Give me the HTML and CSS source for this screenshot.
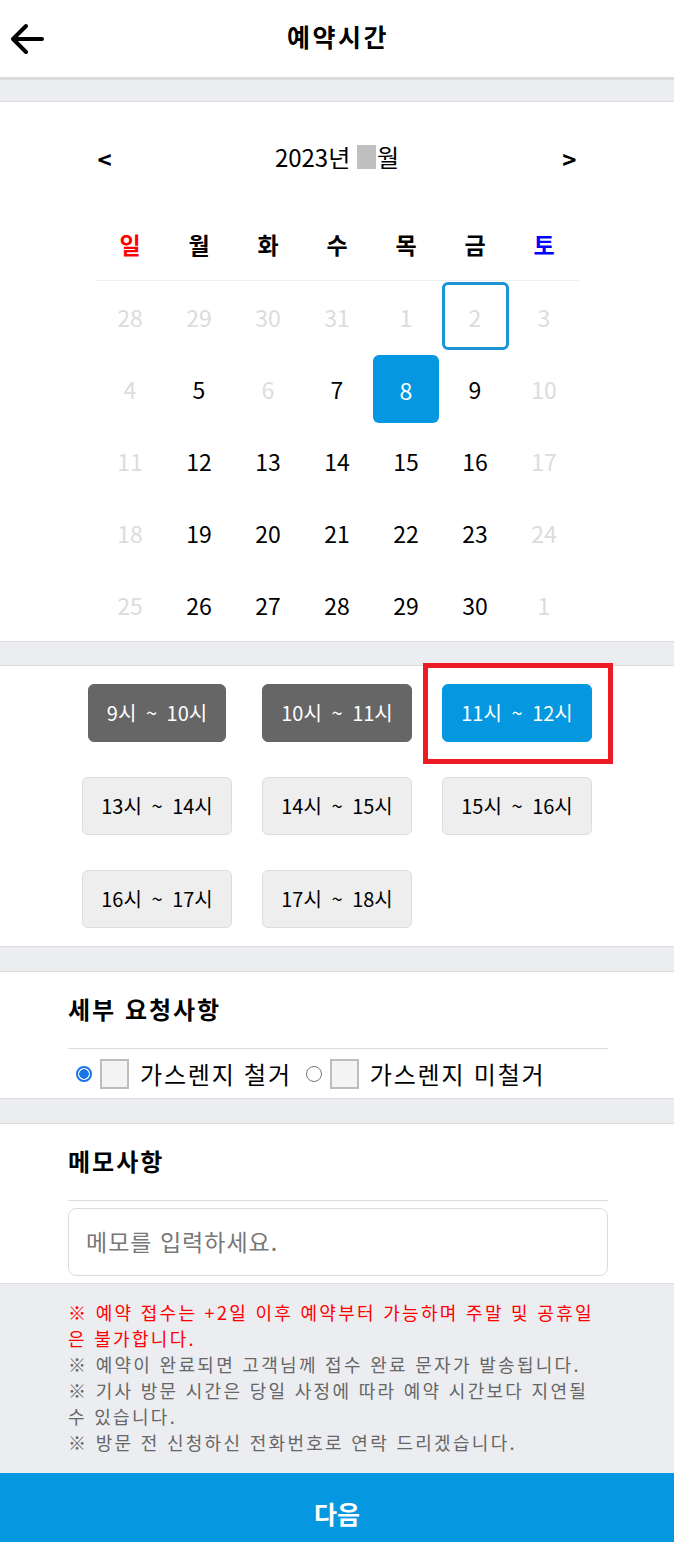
FILE: index.html
```html
<!DOCTYPE html>
<html lang="ko">
<head>
<meta charset="utf-8">
<title>예약시간</title>
<link rel="stylesheet" href="styles.css">
</head>
<body>
<header class="topbar">
  <span class="back" aria-label="뒤로">
    <svg width="36" height="34" viewBox="0 0 36 34"><path d="M33 16 H4 M17 3 L4 16 L17 29" fill="none" stroke="#000" stroke-width="4" stroke-linecap="round" stroke-linejoin="round"/></svg>
  </span>
  <h1 class="title">예약시간</h1>
  <span class="spacer"></span>
</header>
<div class="gap gap-first"></div>

<section class="card calendar">
  <div class="cal-nav">
    <span class="nav-arrow">&lt;</span>
    <span class="cal-title">2023년 <span class="mask"></span>월</span>
    <span class="nav-arrow">&gt;</span>
  </div>
  <div class="weekdays">
    <span class="sun">일</span><span>월</span><span>화</span><span>수</span><span>목</span><span>금</span><span class="sat">토</span>
  </div>
  <div class="days">
    <span class="day muted"><b>28</b></span><span class="day muted"><b>29</b></span><span class="day muted"><b>30</b></span><span class="day muted"><b>31</b></span><span class="day muted"><b>1</b></span><span class="day muted"><b class="today">2</b></span><span class="day muted"><b>3</b></span>
    <span class="day muted"><b>4</b></span><span class="day"><b>5</b></span><span class="day muted"><b>6</b></span><span class="day"><b>7</b></span><span class="day"><b class="selected">8</b></span><span class="day"><b>9</b></span><span class="day muted"><b>10</b></span>
    <span class="day muted"><b>11</b></span><span class="day"><b>12</b></span><span class="day"><b>13</b></span><span class="day"><b>14</b></span><span class="day"><b>15</b></span><span class="day"><b>16</b></span><span class="day muted"><b>17</b></span>
    <span class="day muted"><b>18</b></span><span class="day"><b>19</b></span><span class="day"><b>20</b></span><span class="day"><b>21</b></span><span class="day"><b>22</b></span><span class="day"><b>23</b></span><span class="day muted"><b>24</b></span>
    <span class="day muted"><b>25</b></span><span class="day"><b>26</b></span><span class="day"><b>27</b></span><span class="day"><b>28</b></span><span class="day"><b>29</b></span><span class="day"><b>30</b></span><span class="day muted"><b>1</b></span>
  </div>
</section>
<div class="gap gap-cal"></div>

<section class="card slots">
  <div class="slot-grid">
    <span class="slot disabled">9시 ~ 10시</span>
    <span class="slot disabled">10시 ~ 11시</span>
    <span class="slot active">11시 ~ 12시<span class="highlight"></span></span>
    <span class="slot">13시 ~ 14시</span>
    <span class="slot">14시 ~ 15시</span>
    <span class="slot">15시 ~ 16시</span>
    <span class="slot">16시 ~ 17시</span>
    <span class="slot">17시 ~ 18시</span>
  </div>
</section>
<div class="gap"></div>

<section class="card block">
  <h2 class="block-title">세부 요청사항</h2>
  <div class="options">
    <span class="radio checked"></span><span class="thumb"></span><span class="opt-label">가스렌지 철거</span>
    <span class="radio"></span><span class="thumb"></span><span class="opt-label">가스렌지 미철거</span>
  </div>
</section>
<div class="gap"></div>

<section class="card block memo">
  <h2 class="block-title">메모사항</h2>
  <div class="memo-input">메모를 입력하세요.</div>
</section>

<div class="notes">
  <p class="warn">※ 예약 접수는 +2일 이후 예약부터 가능하며 주말 및 공휴일 은 불가합니다.</p>
  <p>※ 예약이 완료되면 고객님께 접수 완료 문자가 발송됩니다.</p>
  <p>※ 기사 방문 시간은 당일 사정에 따라 예약 시간보다 지연될 수 있습니다.</p>
  <p>※ 방문 전 신청하신 전화번호로 연락 드리겠습니다.</p>
</div>

<div class="next-btn">다음</div>
</body>
</html>
```

FILE: styles.css
```css
* { box-sizing: border-box; }
html, body { margin: 0; padding: 0; }
body {
  background: #ecedf1;
  font-family: "Noto Sans CJK KR", "Noto Sans", sans-serif;
  color: #000;
  line-height: 1.2;
  width: 674px;
}

.topbar {
  height: 80px;
  background: #fff;
  border-bottom: 3px solid #dcdcdc;
  display: grid;
  grid-template-columns: 60px 1fr 60px;
  align-items: center;
}
.back {
  display: flex;
  align-items: center;
  padding-left: 9px;
  padding-top: 2px;
}
.title {
  margin: 0;
  text-align: center;
  font-size: 25px;
  font-weight: 700;
  letter-spacing: 2.5px;
  line-height: 30px;
  padding-bottom: 6px;
  padding-left: 2px;
}

.gap { height: 24px; }
.gap-first { height: 21px; }
.gap-cal { height: 23px; }

.card {
  background: #fff;
  border-top: 1px solid #dcdcdc;
  border-bottom: 1px solid #dcdcdc;
}

/* calendar */
.calendar { padding: 0; }
.cal-nav {
  width: 483px;
  margin: 0 auto;
  height: 110px;
  display: flex;
  justify-content: space-between;
  align-items: center;
  padding: 0 2px;
}
.nav-arrow {
  font-size: 24px;
  font-weight: 700;
  line-height: 1;
  padding-top: 4px;
}
.cal-title {
  font-size: 24px;
  line-height: 1;
  display: flex;
  align-items: center;
  white-space: pre;
}
.mask {
  display: inline-block;
  width: 19px;
  height: 24px;
  background: #c0c0c0;
  margin-right: 1px;
}
.weekdays {
  width: 483px;
  margin: 0 auto;
  height: 69px;
  border-bottom: 1px solid #eeeeee;
  display: grid;
  grid-template-columns: repeat(7, 1fr);
  align-items: center;
  text-align: center;
  font-size: 23px;
  font-weight: 700;
}
.weekdays span { padding-bottom: 3px; }
.weekdays .sun { color: #ff0000; }
.weekdays .sat { color: #0000ff; }

.days {
  width: 483px;
  margin: 0 auto;
  display: grid;
  grid-template-columns: repeat(7, 69px);
  grid-auto-rows: 72px;
}
.day {
  display: flex;
  justify-content: center;
  align-items: flex-start;
  padding-top: 1px;
}
.day b {
  font-weight: 400;
  font-size: 23px;
  width: 67px;
  height: 68px;
  padding-top: 4px;
  display: flex;
  align-items: center;
  justify-content: center;
  border-radius: 6px;
  color: #000;
}
.day.muted b { color: #dcdcdc; }
.day b.today {
  border: 3px solid #1b95d6;
  color: #dcdcdc;
}
.day b.selected {
  background: #0598e0;
  color: #fff;
  width: 66px;
  margin-top: 1px;
}

/* time slots */
.slots { padding: 18px 0 18px; }
.slot-grid {
  width: 540px;
  margin: 0 auto;
  display: grid;
  grid-template-columns: repeat(3, 1fr);
  grid-auto-rows: 58px;
  row-gap: 35px;
  justify-items: center;
}
.slot {
  position: relative;
  height: 58px;
  padding: 0 18px;
  display: flex;
  align-items: center;
  justify-content: center;
  font-size: 20px;
  word-spacing: 4px;
  border-radius: 6px;
  background: #eeeeee;
  border: 1px solid #dddddd;
  color: #000;
  white-space: pre;
}
.slot.disabled {
  background: #666666;
  border-color: #666666;
  color: #fff;
}
.slot.active {
  background: #0598e0;
  border-color: #0598e0;
  color: #fff;
}
.highlight {
  position: absolute;
  top: -22px;
  left: -20px;
  right: -22px;
  bottom: -23px;
  border: 5px solid #ed1c24;
  pointer-events: none;
}

/* blocks */
.block { padding: 22px 66px 0 68px; }
.block-title {
  margin: 0;
  font-size: 24px;
  font-weight: 700;
  letter-spacing: 2px;
  line-height: 30px;
  padding-bottom: 24px;
  border-bottom: 1px solid #dcdcdc;
}
.options {
  height: 49px;
  display: flex;
  align-items: center;
  padding-left: 8px;
}
.radio {
  width: 16px;
  height: 16px;
  border-radius: 50%;
  border: 1.5px solid #767676;
  margin-right: 8px;
  flex: none;
}
.radio.checked {
  border: 2px solid #1a73e8;
  background: radial-gradient(circle, #1a73e8 0 4.5px, #fff 5px);
}
.thumb {
  width: 29px;
  height: 30px;
  background: #f4f4f4;
  border: 2px solid #bdbdbd;
  margin-right: 11px;
  flex: none;
}
.opt-label {
  font-size: 24px;
  letter-spacing: 1.8px;
  line-height: 30px;
  margin-right: 14px;
  white-space: nowrap;
}

.memo { padding-bottom: 7px; }
.memo-input {
  margin-top: 7px;
  height: 68px;
  border: 1px solid #dcdcdc;
  border-radius: 8px;
  display: flex;
  align-items: center;
  padding-left: 17px;
  font-size: 23px;
  letter-spacing: 1px;
  color: #777777;
}

/* notes */
.notes {
  padding: 15px 0 18px 68px;
  width: 604px;
  font-size: 18px;
  letter-spacing: 2.3px;
  line-height: 26px;
  color: #666666;
}
.notes p { margin: 0; }
.notes .warn { color: #ff0000; }

.next-btn {
  height: 80px;
  background: #0598e0;
  color: #fff;
  font-size: 25px;
  font-weight: 700;
  display: flex;
  align-items: center;
  justify-content: center;
}
```
